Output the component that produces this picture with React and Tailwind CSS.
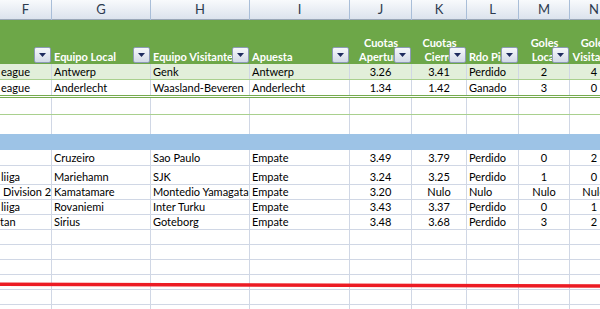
import React from 'react'

const cols = 'grid grid-cols-[52px_99px_99px_100px_62px_55px_52px_51px_49px]'

function FilterButton() {
  return (
    <span className="absolute right-[1px] bottom-[1px] z-10 flex h-4 w-[17px] items-center justify-center rounded-[2px] border border-[#8d9bb6] bg-linear-to-b from-[#f6f8fb] to-[#d3dae6]">
      <svg width="7" height="4" viewBox="0 0 7 4">
        <path d="M0 0h7L3.5 4z" fill="#1e2b5e" />
      </svg>
    </span>
  )
}

function HeadCell({ lines = [], align = 'left' }) {
  return (
    <div className={`relative flex h-full flex-col justify-end overflow-hidden leading-[14px] whitespace-nowrap ${align === 'center' ? 'items-center' : 'items-start pl-[2px]'}`}>
      {lines.map((l) => (
        <span key={l}>{l}</span>
      ))}
      <FilterButton />
    </div>
  )
}

const aligns = ['left', 'left', 'left', 'left', 'center', 'center', 'left', 'center', 'center']

function Row({ cells = [], h, bg = 'bg-white', border = '', lead = 0, line = 'border-[#d0d7e5]' }) {
  return (
    <div className={`${cols} ${h} ${bg} ${border}`}>
      {aligns.map((a, i) => (
        <div
          key={i}
          className={`flex items-end overflow-hidden whitespace-nowrap border-r pb-[1px] leading-[13px] ${line} ${
            a === 'center' ? 'justify-center' : 'pl-[2px]'
          }`}
        >
          {i === 0 && cells[0] ? (
            <span style={{ marginLeft: lead }}>{cells[0]}</span>
          ) : (
            cells[i] ?? ''
          )}
        </div>
      ))}
    </div>
  )
}

const partidos = [
  { h: 'h-4', cells: ['', 'Cruzeiro', 'Sao Paulo', 'Empate', '3.49', '3.79', 'Perdido', '0', '2'] },
  { h: 'h-[19px]', cells: ['liiga', 'Mariehamn', 'SJK', 'Empate', '3.24', '3.25', 'Perdido', '1', '0'], lead: -1 },
  { h: 'h-[15px]', cells: ['Division 2', 'Kamatamare', 'Montedio Yamagata', 'Empate', '3.20', 'Nulo', 'Nulo', 'Nulo', 'Nulo'], lead: 1 },
  { h: 'h-[15px]', cells: ['liiga', 'Rovaniemi', 'Inter Turku', 'Empate', '3.43', '3.37', 'Perdido', '0', '1'], lead: -1 },
  { h: 'h-[15px]', cells: ['tan', 'Sirius', 'Goteborg', 'Empate', '3.48', '3.68', 'Perdido', '3', '2'], lead: -2 },
]

export default function App() {
  return (
    <div className="relative h-[309px] w-[600px] overflow-hidden bg-white font-['Lato',sans-serif] text-[11px] text-black">
      <div className="w-[619px]">
        {/* letras de columna */}
        <div className={`${cols} h-5 border-b border-[#9aa7b7] bg-linear-to-b from-[#f8fafc] to-[#dce3ed] text-[13px] text-[#2c3a4f]`}>
          {['F', 'G', 'H', 'I', 'J', 'K', 'L', 'M', 'N'].map((c) => (
            <div key={c} className="flex items-center justify-center border-r border-[#a9bed8]">
              {c}
            </div>
          ))}
        </div>

        {/* cabecera de la tabla */}
        <div className={`${cols} h-[44px] bg-[#6da748] font-bold text-white`}>
          <HeadCell />
          <HeadCell lines={['Equipo Local']} />
          <HeadCell lines={['Equipo Visitante']} />
          <HeadCell lines={['Apuesta']} />
          <HeadCell lines={['Cuotas', 'Apertura']} align="center" />
          <HeadCell lines={['Cuotas', 'Cierre']} align="center" />
          <HeadCell lines={['Rdo Pick']} />
          <HeadCell lines={['Goles', 'Local']} align="center" />
          <HeadCell lines={['Goles', 'Visitante']} align="center" />
        </div>

        <Row
          h="h-4"
          bg="bg-[#e2efda]"
          border="border-b border-[#a9d08e]"
          lead={-1}
          cells={['eague', 'Antwerp', 'Genk', 'Antwerp', '3.26', '3.41', 'Perdido', '2', '4']}
        />
        <Row
          h="h-[18px]"
          border="border-b-[3px] border-double border-[#75aa4e]"
          lead={-1}
          cells={['eague', 'Anderlecht', 'Waasland-Beveren', 'Anderlecht', '1.34', '1.42', 'Ganado', '3', '0']}
        />
        <Row h="h-[17px]" border="border-b border-[#a9d08e]" />
        <Row h="h-[19px]" />
        <div className="h-4 bg-[#9dc3e6]" />

        {partidos.map((p, i) => (
          <Row key={i} h={p.h} border="border-b border-[#d0d7e5]" lead={p.lead} cells={p.cells} />
        ))}
        {[0, 1, 2, 3, 4, 5].map((i) => (
          <Row key={'v' + i} h="h-[15px]" border="border-b border-[#d0d7e5]" />
        ))}
      </div>

      {/* raya roja dibujada encima */}
      <svg className="pointer-events-none absolute inset-0" width="600" height="309">
        <line x1="0" y1="284.2" x2="600" y2="286" stroke="#ec1c24" strokeWidth="3.6" />
      </svg>
    </div>
  )
}
